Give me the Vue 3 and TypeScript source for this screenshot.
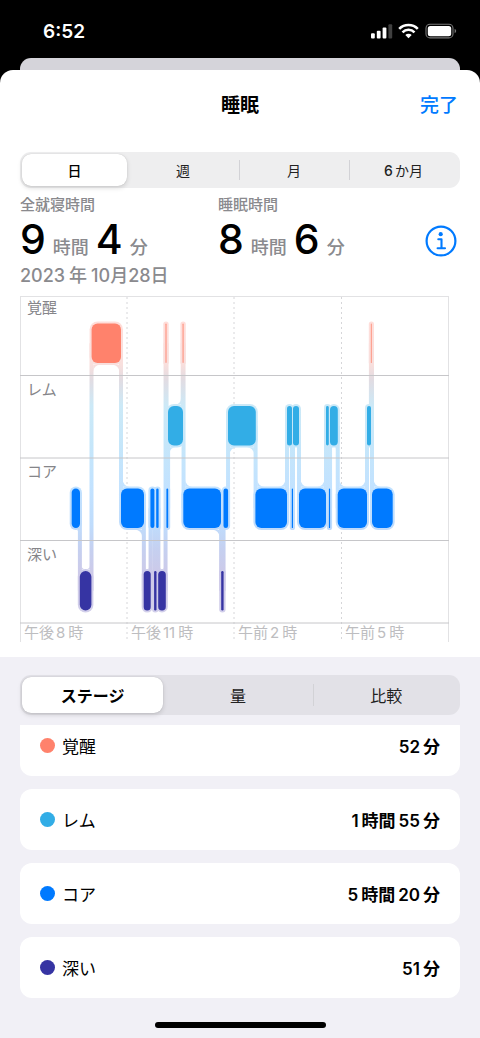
<script setup lang="ts">
import { ref } from 'vue'

type Stage = 'awake' | 'rem' | 'core' | 'deep'
interface Segment { stage: Stage; from: number; to: number }

const ranges = ['日', '週', '月', '6か月']
const views = ['ステージ', '量', '比較']
const range = ref(ranges[0])
const view = ref(views[0])

/* Splits "1時間55分" into digit runs and word runs so they can be spaced. */
const runs = (text: string): string[] => text.match(/\d+|\D+/g) ?? []

const summary = [
  { label: '全就寝時間', hours: 9, minutes: 4 },
  { label: '睡眠時間', hours: 8, minutes: 6 },
]

const totals: { stage: Stage; name: string; value: string }[] = [
  { stage: 'awake', name: '覚醒', value: '52分' },
  { stage: 'rem', name: 'レム', value: '1時間55分' },
  { stage: 'core', name: 'コア', value: '5時間20分' },
  { stage: 'deep', name: '深い', value: '51分' },
]

const BAR = 39.5
const HALO = 2
const top: Record<Stage, number> = { awake: 27.5, rem: 110, core: 192.5, deep: 275 }

const rowLabels = [
  { name: '覚醒', y: 17 },
  { name: 'レム', y: 99 },
  { name: 'コア', y: 181 },
  { name: '深い', y: 264 },
]
const hours = [
  { x: 4, half: '午後', hour: 8 },
  { x: 111, half: '午後', hour: 11 },
  { x: 218, half: '午前', hour: 2 },
  { x: 325, half: '午前', hour: 5 },
]

const night: Segment[] = [
  { stage: 'core', from: 51.7, to: 60 },
  { stage: 'deep', from: 59.8, to: 71.4 },
  { stage: 'awake', from: 71.6, to: 101 },
  { stage: 'core', from: 101, to: 124 },
  { stage: 'deep', from: 123.7, to: 130.7 },
  { stage: 'core', from: 130.4, to: 134.4 },
  { stage: 'deep', from: 134.1, to: 136.5 },
  { stage: 'core', from: 136.2, to: 138.6 },
  { stage: 'deep', from: 138.2, to: 145.8 },
  { stage: 'awake', from: 145.3, to: 146.7 },
  { stage: 'core', from: 146.4, to: 148.2 },
  { stage: 'rem', from: 148, to: 163 },
  { stage: 'awake', from: 162.4, to: 163.8 },
  { stage: 'core', from: 163.3, to: 201 },
  { stage: 'deep', from: 201.2, to: 203.6 },
  { stage: 'core', from: 203.5, to: 208.1 },
  { stage: 'rem', from: 208, to: 235.8 },
  { stage: 'core', from: 235.4, to: 267 },
  { stage: 'rem', from: 267, to: 272 },
  { stage: 'core', from: 271.8, to: 273 },
  { stage: 'rem', from: 273, to: 279 },
  { stage: 'core', from: 279, to: 306 },
  { stage: 'rem', from: 306, to: 308.8 },
  { stage: 'core', from: 308.9, to: 310.1 },
  { stage: 'rem', from: 310, to: 317.8 },
  { stage: 'core', from: 317.7, to: 347 },
  { stage: 'rem', from: 347, to: 351 },
  { stage: 'awake', from: 350.8, to: 352 },
  { stage: 'core', from: 352, to: 372.7 },
]

const radius = (s: Segment) => Math.min(6, (s.to - s.from) / 2)

/* Vertical links between consecutive stages, with a soft inner corner at each end. */
const links = night.slice(1).map((next, i) => {
  const prev = night[i]
  const x = (prev.to + next.from) / 2
  const down = top[next.stage] > top[prev.stage]
  const y1 = Math.min(top[prev.stage], top[next.stage]) + BAR / 2
  const y2 = Math.max(top[prev.stage], top[next.stage]) + BAR / 2
  const corner = (s: Segment, side: number, below: boolean) => {
    const r = Math.min(7, Math.max(0, (s.to - s.from) / 2 - HALO))
    const cx = x + side * (HALO - 0.3)
    const cy = below ? top[s.stage] + BAR + HALO - 0.3 : top[s.stage] - HALO + 0.3
    const v = below ? 1 : -1
    const sweep = side * v > 0 ? 0 : 1
    return `M${cx} ${cy}h${side * r}A${r} ${r} 0 0 ${sweep} ${cx} ${cy + v * r}Z`
  }
  return {
    x: x - HALO,
    y: y1,
    height: y2 - y1,
    fillets: corner(prev, -1, down) + corner(next, 1, !down),
  }
})
</script>

<template>
  <div class="screen">
    <header class="status">
      <span class="clock">6:52</span>
      <svg class="status-icons" viewBox="0 0 86 16" aria-hidden="true">
        <g fill="#fff">
          <rect x="0" y="10.2" width="3.8" height="5.2" rx="1" />
          <rect x="5.8" y="7.8" width="3.8" height="7.6" rx="1" />
          <rect x="11.6" y="4.6" width="3.8" height="10.8" rx="1" />
          <rect x="17.4" y="1.2" width="3.8" height="14.2" rx="1" opacity=".25" />
        </g>
        <g fill="none" stroke="#fff" stroke-width="2.6">
          <path d="M28.2 5.9A13.2 13.2 0 0 1 46.8 5.9" />
          <path d="M31.5 9.3A8.5 8.5 0 0 1 43.5 9.3" />
        </g>
        <path d="M34.3 12A4.6 4.6 0 0 1 40.7 12L37.5 15.2Z" fill="#fff" />
        <rect x="55" y="1.3" width="27" height="13.6" rx="4" fill="none" stroke="#777" stroke-width="1.1" />
        <rect x="56.8" y="3" width="23.4" height="10.2" rx="2.5" fill="#fff" />
        <path d="M83.6 5.8Q85.2 6.5 85.2 8T83.6 10.2Z" fill="#777" />
      </svg>
    </header>
    <div class="backdrop"></div>

    <main class="sheet">
      <div class="titlebar">
        <h1>睡眠</h1>
        <button type="button" class="done">完了</button>
      </div>

      <div class="segmented range" role="group" aria-label="期間">
        <button
          v-for="r in ranges" :key="r" type="button"
          :class="{ on: r === range }" :aria-pressed="r === range" @click="range = r"
        ><span class="runs"><span v-for="(t, i) in runs(r)" :key="i" :class="{ digits: /\d/.test(t) }">{{ t }}</span></span></button>
      </div>

      <section class="summary">
        <div v-for="s in summary" :key="s.label" class="stat">
          <div class="stat-label">{{ s.label }}</div>
          <div class="stat-value">
            <b>{{ s.hours }}</b><span>時間</span><b>{{ s.minutes }}</b><span>分</span>
          </div>
        </div>
        <button type="button" class="info" aria-label="詳細">
          <svg viewBox="0 0 32 32" aria-hidden="true">
            <circle cx="16" cy="16" r="14.4" fill="none" stroke="#007aff" stroke-width="2.2" />
            <circle cx="15.7" cy="9.2" r="2.1" fill="#007aff" />
            <path d="M13.3 14.3H16.5V23M12.6 23.2H20" fill="none" stroke="#007aff" stroke-width="2.1" stroke-linecap="round" stroke-linejoin="round" />
          </svg>
        </button>
      </section>
      <p class="date"><span class="runs"><span>2023</span><span>年</span><span>10月28日</span></span></p>

      <svg class="chart" viewBox="0 0 429 346" role="img" aria-label="睡眠ステージ">
        <defs>
          <linearGradient id="band" gradientUnits="userSpaceOnUse" x1="0" y1="25" x2="0" y2="317">
            <stop offset="0" stop-color="#ffdeda" />
            <stop offset=".15" stop-color="#f8dfdd" />
            <stop offset=".2" stop-color="#e2dce2" />
            <stop offset=".29" stop-color="#cce9f7" />
            <stop offset=".43" stop-color="#c5e6fa" />
            <stop offset=".57" stop-color="#c2e2ff" />
            <stop offset=".7" stop-color="#bfdcfc" />
            <stop offset=".78" stop-color="#c5d0f0" />
            <stop offset=".87" stop-color="#cdc9e8" />
            <stop offset="1" stop-color="#d2cfea" />
          </linearGradient>
        </defs>
        <g class="frame">
          <path d="M0 .5H429M.5 0V346M428.5 0V346" />
          <path class="dash" d="M107 1V346M214 1V346M321.5 1V346" />
        </g>
        <g fill="url(#band)">
          <rect
            v-for="(s, i) in night" :key="i"
            :x="s.from - HALO" :y="top[s.stage] - HALO"
            :width="s.to - s.from + HALO * 2" :height="BAR + HALO * 2" :rx="radius(s) + HALO"
          />
          <template v-for="(l, i) in links" :key="i">
            <rect :x="l.x" :y="l.y" :width="HALO * 2" :height="l.height" />
            <path :d="l.fillets" />
          </template>
        </g>
        <path class="rules" d="M0 79.5H429M0 162H429M0 244.5H429M0 327H429" />
        <rect
          v-for="(s, i) in night" :key="i" :class="['bar', s.stage, { brief: s.to - s.from < 1.5 }]"
          :x="s.from" :y="top[s.stage]" :width="s.to - s.from" :height="BAR" :rx="radius(s)"
        />
        <text v-for="r in rowLabels" :key="r.name" class="row-label" x="7" :y="r.y">{{ r.name }}</text>
        <text v-for="h in hours" :key="h.x" class="hour" :x="h.x" y="342">{{ h.half }}<tspan dx="2">{{ h.hour }}</tspan><tspan dx="3">時</tspan></text>
      </svg>
    </main>

    <section class="panel">
      <div class="segmented view" role="group" aria-label="表示">
        <button
          v-for="v in views" :key="v" type="button"
          :class="{ on: v === view }" :aria-pressed="v === view" @click="view = v"
        >{{ v }}</button>
      </div>
      <ul class="totals">
        <li v-for="t in totals" :key="t.name">
          <i :class="['dot', t.stage]"></i>
          <span class="name">{{ t.name }}</span>
          <span class="runs value"><span v-for="(p, i) in runs(t.value)" :key="i">{{ p }}</span></span>
        </li>
      </ul>
      <div class="home"></div>
    </section>
  </div>
</template>

<style>
body { margin: 0; background: #000; }
</style>

<style scoped>
.screen {
  min-height: 100vh;
  display: flex;
  flex-direction: column;
  background: #000;
  color: #000;
  font-family: Inter, "Noto Sans CJK JP", sans-serif;
}
button {
  border: 0;
  padding: 0;
  background: none;
  font: inherit;
  color: inherit;
  cursor: pointer;
}
.status {
  height: 58px;
  box-sizing: border-box;
  padding: 4px 23px 0 43px;
  display: flex;
  align-items: center;
  justify-content: space-between;
  color: #fff;
}
.clock { font-size: 19px; font-weight: 600; }
.status-icons { width: 86px; height: 16px; }
.backdrop {
  height: 24px;
  margin: 0 20px -12px;
  border-radius: 11px 11px 0 0;
  background: #d5d4da;
}
.sheet {
  position: relative;
  padding: 0 20px 15px;
  border-radius: 13px 13px 0 0;
  background: #fff;
}
.titlebar {
  height: 70px;
  box-sizing: border-box;
  padding: 2px 2px 0;
  display: grid;
  grid-template-columns: 1fr auto 1fr;
  align-items: center;
}
.titlebar h1 {
  grid-column: 2;
  margin: 0;
  font-size: 19px;
  line-height: 28px;
  font-weight: 700;
}
.done {
  justify-self: end;
  font-size: 19px;
  line-height: 28px;
  font-weight: 500;
  color: #007aff;
}
.segmented {
  display: grid;
  box-sizing: border-box;
}
.segmented button {
  position: relative;
  color: #222;
}
.segmented button + button:not(.on)::before {
  content: "";
  position: absolute;
  left: 0;
  top: 20%;
  bottom: 20%;
  width: 1px;
  background: #d2d2d6;
}
.segmented .on + button::before { display: none; }
.segmented .on {
  background: #fff;
  color: #000;
  box-shadow: 0 2px 5px rgba(0, 0, 0, .14), 0 0 1px rgba(0, 0, 0, .2);
}
.range {
  height: 36px;
  margin-top: 12px;
  padding: 2px;
  grid-template-columns: 105fr 112fr 110fr 109fr;
  border-radius: 11px;
  background: #eeeeef;
  font-size: 14px;
}
.range .on {
  border-radius: 9px;
  font-weight: 500;
}
.range .digits { font-weight: 500; }
.runs {
  display: inline-flex;
  align-items: baseline;
  gap: 2px;
}
.summary {
  margin-top: 7px;
  display: grid;
  grid-template-columns: 45% 1fr auto;
  align-items: end;
}
.stat-label {
  font-size: 15px;
  line-height: 20px;
  font-weight: 500;
  color: #8a8a8e;
}
.stat-value {
  height: 46px;
  display: flex;
  align-items: baseline;
  gap: 7px;
  font-size: 18px;
  line-height: 48px;
  font-weight: 500;
  color: #8a8a8e;
}
.stat-value b {
  font-size: 41px;
  font-weight: 500;
  color: #000;
}
.info {
  width: 32px;
  height: 32px;
  margin: 0 3px 4px 0;
}
.info svg {
  display: block;
  width: 32px;
  height: 32px;
}
.date {
  margin: 3px 0 8px;
  font-size: 18px;
  line-height: 24px;
  font-weight: 500;
  color: #8a8a8e;
}
.date .runs { gap: 4px; }
.chart {
  display: block;
  width: calc(100% - 11px);
  height: auto;
}
.frame path {
  fill: none;
  stroke: #e2e2e4;
}
.frame .dash {
  stroke: #d6d6d9;
  stroke-dasharray: 2 3;
}
.rules { stroke: #c6c6c9; }
.row-label, .hour {
  font-size: 15px;
  fill: #858589;
}
.hour { fill: #bdbdc0; }
.bar.awake { fill: #ff826c; }
.bar.rem { fill: #32ade6; }
.bar.core { fill: #007aff; }
.bar.deep { fill: #3634a3; }
.bar.awake.brief { opacity: .65; }
.panel {
  flex: 1;
  display: flex;
  flex-direction: column;
  padding: 18px 20px 10px;
  background: #f1f0f6;
}
.view {
  height: 40px;
  padding: 2px 0 2px 2px;
  grid-template-columns: 142fr 150fr 148fr;
  border-radius: 11px;
  background: #e2e1e7;
  font-size: 16px;
}
.view .on {
  border-radius: 9px;
  font-weight: 700;
}
.totals {
  margin: 10px 0 0;
  padding: 0;
  overflow: hidden;
  list-style: none;
}
.totals li {
  height: 61px;
  box-sizing: border-box;
  padding: 0 20px;
  display: flex;
  align-items: center;
  border-radius: 12px;
  background: #fff;
  font-size: 17px;
}
.totals li + li { margin-top: 13px; }
.totals li:first-child { margin-top: -10px; }
.dot {
  width: 15px;
  height: 15px;
  border-radius: 50%;
}
.dot.awake { background: #ff826c; }
.dot.rem { background: #32ade6; }
.dot.core { background: #007aff; }
.dot.deep { background: #3634a3; }
.name { margin-left: 7px; }
.value {
  margin-left: auto;
  gap: 3px;
  font-weight: 600;
}
.home {
  width: 171px;
  height: 6px;
  margin: auto auto 0;
  border-radius: 3px;
  background: #000;
}
</style>
